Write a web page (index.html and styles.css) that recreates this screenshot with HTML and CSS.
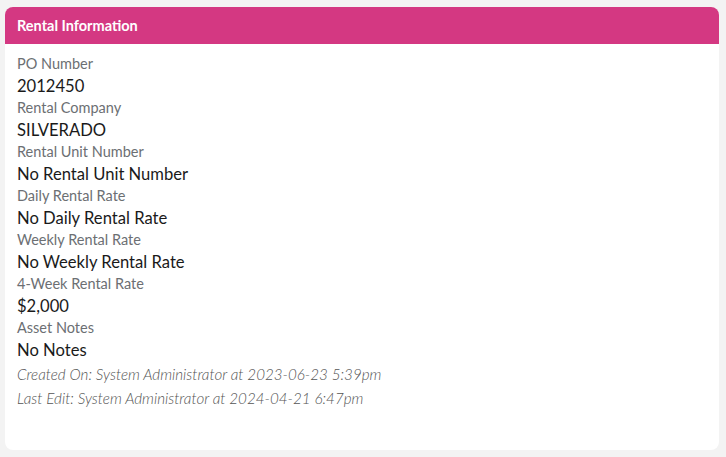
FILE: index.html
```html
<!DOCTYPE html>
<html>
<head>
<meta charset="utf-8">
<link rel="stylesheet" href="styles.css">
</head>
<body>
<div class="card">
  <div class="card-header">Rental Information</div>
  <div class="card-body">
    <div class="field"><div class="label">PO Number</div><div class="value">2012450</div></div>
    <div class="field"><div class="label">Rental Company</div><div class="value">SILVERADO</div></div>
    <div class="field"><div class="label">Rental Unit Number</div><div class="value">No Rental Unit Number</div></div>
    <div class="field"><div class="label">Daily Rental Rate</div><div class="value">No Daily Rental Rate</div></div>
    <div class="field"><div class="label">Weekly Rental Rate</div><div class="value">No Weekly Rental Rate</div></div>
    <div class="field"><div class="label">4-Week Rental Rate</div><div class="value">$2,000</div></div>
    <div class="field"><div class="label">Asset Notes</div><div class="value">No Notes</div></div>
    <div class="meta">Created On: System Administrator at 2023-06-23 5:39pm</div>
    <div class="meta">Last Edit: System Administrator at 2024-04-21 6:47pm</div>
  </div>
</div>
</body>
</html>
```
FILE: styles.css
```css
html, body {
  margin: 0;
  padding: 0;
  background: #f3f3f3;
  font-family: "Lato", "Noto Sans", sans-serif;
}
body {
  padding: 7px 7px 7px 5px;
}
.card {
  background: #ffffff;
  border-radius: 8px;
  height: 443px;
  overflow: hidden;
  box-sizing: border-box;
}
.card-header {
  background: #d43882;
  color: #ffffff;
  font-weight: 700;
  font-size: 14.5px;
  height: 37px;
  line-height: 37px;
  padding: 0 12px;
}
.card-body {
  padding: 10px 12px;
}
.label {
  color: #6c6f73;
  font-size: 14.5px;
  line-height: 20px;
}
.value {
  color: #1a1a1a;
  font-size: 16.6px;
  line-height: 24px;
}
.meta {
  color: #555;
  font-style: italic;
  font-weight: 300;
  font-size: 15.2px;
  line-height: 24px;
}
```
